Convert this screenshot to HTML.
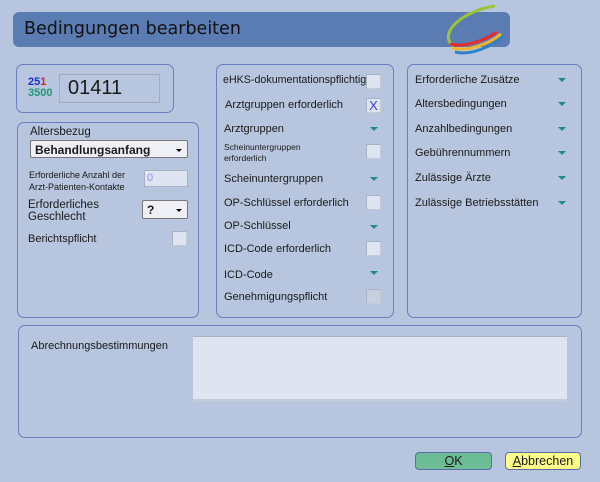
<!DOCTYPE html>
<html><head><meta charset="utf-8"><style>
*{margin:0;padding:0;box-sizing:border-box}
body{width:600px;height:482px;background:#b7c5de;font-family:"Liberation Sans",sans-serif;font-size:11px;color:#1a1a1a;position:relative;overflow:hidden}
.a{position:absolute}
.t{font-size:11px}
.panel{position:absolute;border:1px solid #6a7fc0;border-radius:7px}
.cb{position:absolute;width:15px;height:15px;background:#dfe5f0;border:1px solid #c4cbd8;border-top-color:#a9b3c6;border-left-color:#a9b3c6}
.tri{position:absolute;width:0;height:0;border-left:4px solid transparent;border-right:4px solid transparent;border-top:4px solid #1f8a86}
.sel{position:absolute;background:#eef0f5;border:1px solid #777;border-radius:2px;font-weight:bold;font-size:12px;padding:2px 4px}
.sel:after{content:"";position:absolute;right:5px;top:8px;border-left:3px solid transparent;border-right:3px solid transparent;border-top:3px solid #000}
.btn{position:absolute;height:18px;border:1px solid #5a6fa8;border-radius:4px;text-align:center;font-size:12.5px;line-height:16px}
</style></head><body>
<div class="a" style="left:13px;top:12px;width:497px;height:35px;background:#5b7cb2;border-radius:6px"></div>
<div class="a" style="left:24px;top:19px;font-size:17.5px;font-family:'DejaVu Sans',sans-serif;color:#111">Bedingungen bearbeiten</div>
<svg class="a" style="left:435px;top:4px" width="70" height="52" viewBox="0 0 70 52">
<path d="M60 2 C30 6 2 28 18 42" stroke="#9cc43a" stroke-width="3" fill="none"/>
<path d="M15 40 C30 44 50 36 62 28" stroke="#e52b2b" stroke-width="3" fill="none"/>
<path d="M17 44 C32 48 54 40 66 30" stroke="#f2b52a" stroke-width="3" fill="none"/>
<path d="M20 48 C36 52 58 42 68 32" stroke="#2f82c8" stroke-width="3" fill="none"/>
</svg>
<div class="panel" style="left:16px;top:64px;width:158px;height:49px"></div>
<div class="a" style="left:28px;top:77px;font-weight:bold;font-size:11px;line-height:11px"><span style="color:#1b2fd0">25</span><span style="color:#d82020">1</span><br><span style="color:#1f9a78">3500</span></div>
<div class="a" style="left:59px;top:74px;width:101px;height:29px;border:1px solid #a0aac0;font-size:20px;padding:2px 8px">01411</div>
<div class="panel" style="left:17px;top:122px;width:182px;height:196px"></div>
<div class="a" style="left:30px;top:126px;font-size:11.5px">Altersbezug</div>
<div class="sel" style="left:30px;top:140px;width:158px;height:18px">Behandlungsanfang</div>
<div class="a" style="left:29px;top:169px;font-size:9px;line-height:12px">Erforderliche Anzahl der<br>Arzt-Patienten-Kontakte</div>
<div class="a" style="left:144px;top:170px;width:44px;height:17px;background:#dfe5f0;border:1px solid #a9b3c6;color:#8a90f0;font-size:11px;padding:1px 2px">0</div>
<div class="a" style="left:28px;top:199px;font-size:11.5px;line-height:12px">Erforderliches<br>Geschlecht</div>
<div class="sel" style="left:142px;top:200px;width:46px;height:19px">?</div>
<div class="a t" style="left:28px;top:233px">Berichtspflicht</div>
<div class="cb" style="left:172px;top:231px"></div>
<div class="panel" style="left:216px;top:64px;width:178px;height:254px"></div>
<div class="a" style="left:223px;top:74px;font-size:10.7px">eHKS-dokumentationspflichtig</div><div class="cb" style="left:366px;top:74px"></div>
<div class="a t" style="left:225px;top:99px">Arztgruppen erforderlich</div><div class="cb" style="left:366px;top:98px;color:#3040e0;font-size:13px;text-align:center;line-height:13px">X</div>
<div class="a t" style="left:224px;top:123px">Arztgruppen</div><div class="tri" style="left:370px;top:127px"></div>
<div class="a" style="left:224px;top:142px;font-size:8.5px;line-height:11px">Scheinuntergruppen<br>erforderlich</div><div class="cb" style="left:366px;top:144px"></div>
<div class="a t" style="left:224px;top:173px">Scheinuntergruppen</div><div class="tri" style="left:370px;top:177px"></div>
<div class="a t" style="left:224px;top:197px">OP-Schlüssel erforderlich</div><div class="cb" style="left:366px;top:195px"></div>
<div class="a t" style="left:224px;top:220px">OP-Schlüssel</div><div class="tri" style="left:370px;top:225px"></div>
<div class="a t" style="left:224px;top:243px">ICD-Code erforderlich</div><div class="cb" style="left:366px;top:241px"></div>
<div class="a t" style="left:224px;top:269px">ICD-Code</div><div class="tri" style="left:370px;top:271px"></div>
<div class="a t" style="left:224px;top:291px">Genehmigungspflicht</div><div class="cb" style="left:366px;top:289px;background:#c8d0e0"></div>
<div class="panel" style="left:407px;top:64px;width:175px;height:254px"></div>
<div class="a t" style="left:415px;top:74px">Erforderliche Zusätze</div><div class="tri" style="left:558px;top:78px"></div>
<div class="a t" style="left:415px;top:98px">Altersbedingungen</div><div class="tri" style="left:558px;top:102px"></div>
<div class="a t" style="left:415px;top:123px">Anzahlbedingungen</div><div class="tri" style="left:558px;top:127px"></div>
<div class="a t" style="left:415px;top:147px">Gebührennummern</div><div class="tri" style="left:558px;top:151px"></div>
<div class="a t" style="left:415px;top:172px">Zulässige Ärzte</div><div class="tri" style="left:558px;top:176px"></div>
<div class="a t" style="left:415px;top:197px">Zulässige Betriebsstätten</div><div class="tri" style="left:558px;top:201px"></div>
<div class="panel" style="left:18px;top:325px;width:564px;height:113px"></div>
<div class="a t" style="left:31px;top:340px">Abrechnungsbestimmungen</div>
<div class="a" style="left:193px;top:336px;width:374px;height:65px;background:#dfe5f0;border-top:1px solid #a9b3c6;border-bottom:2px solid #c4cbd8"></div>
<div class="btn" style="left:415px;top:452px;width:77px;background:#6cbc95"><u>O</u>K</div>
<div class="btn" style="left:505px;top:452px;width:76px;background:#fdfd8a"><u>A</u>bbrechen</div>
</body></html>
